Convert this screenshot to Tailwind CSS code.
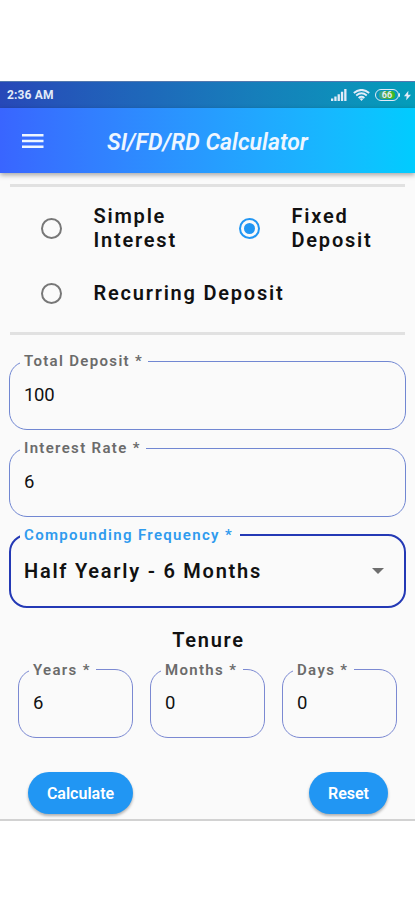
<!DOCTYPE html>
<html lang="en">
<head>
  <meta charset="UTF-8" />
  <meta name="viewport" content="width=device-width, initial-scale=1.0" />
  <title>SI/FD/RD Calculator</title>
  <script src="https://cdn.jsdelivr.net/npm/@tailwindcss/browser@4"></script>
</head>
<body class="bg-white font-['Roboto',sans-serif] text-[#111] h-screen overflow-hidden pt-[81px]">
  <div class="h-[740px] bg-[#fafafa] border-b-2 border-[#d2d2d2] flex flex-col">

    <!-- Status bar -->
    <div class="h-[27px] shrink-0 border-t border-[#5378ae] bg-linear-to-r from-[#2748b8] to-[#039dba] flex items-center justify-between pl-[7px] pr-[4px] text-[#e2ebf8]">
      <span class="text-[12px] font-bold tracking-[0.15px]">2:36 AM</span>
      <div class="flex items-center">
        <svg class="w-4 h-3" viewBox="0 0 16 12" fill="currentColor">
          <path d="M0 9.5h2.3V12H0zM3.3 7.5h2.3V12H3.3zM6.6 5.2h2.3V12H6.6zM9.9 2.8h2.3V12H9.9zM13.2 0h2.3v12h-2.3z" />
        </svg>
        <svg class="w-[17px] h-3 ml-[6px]" viewBox="0 0 17 12" fill="none" stroke="currentColor" stroke-width="1.9">
          <path d="M.8 4Q8.500-2.200 16.200 4M3.200 6.500Q8.500 2.200 13.800 6.500M5.600 9Q8.500 6.700 11.400 9" />
          <path d="M8.500 12L6.500 9.800Q8.500 8.500 10.500 9.800z" fill="currentColor" stroke="none" />
        </svg>
        <div class="ml-[5px] w-[24px] h-3 rounded-full border border-current py-px px-[3px]">
          <div class="h-full w-full rounded-full bg-linear-to-r from-[#3fa58b] via-[#4cab3a] to-[#35c01c] flex items-center justify-center text-[9px] font-bold leading-none">66</div>
        </div>
        <span class="w-px h-1 bg-current rounded-r"></span>
        <svg class="w-[7px] h-[11px] ml-[4px]" viewBox="0 0 8 11" fill="currentColor">
          <path d="M5 0L0 6.300h3L2.500 11 8 4.500H4.700z" />
        </svg>
      </div>
    </div>

    <!-- App bar -->
    <header class="h-[65px] shrink-0 bg-linear-to-r from-[#3965ff] to-[#00ccff] shadow-[0_2px_5px_rgba(0,0,0,0.35)] flex items-center pl-[22px] text-[#eef6ff]">
      <svg class="w-[22px] h-4" viewBox="0 0 22 16" fill="currentColor">
        <path d="M0 1h21.500v2.500H0zM0 6.800h21.500v2.500H0zM0 12.500h21.500V15H0z" />
      </svg>
      <h1 class="ml-[63px] pt-[5px] text-[23px] font-semibold italic tracking-[0.03px] whitespace-nowrap">SI/FD/RD Calculator</h1>
    </header>

    <main class="px-[10px] pt-[11px]">
      <!-- Deposit type -->
      <section class="h-[151px] border-y-[3px] border-[#e1e1e1] text-[20px] leading-[24px] font-semibold tracking-[1.78px]">
        <div class="flex pt-[17px]">
          <label class="w-[198px] flex items-center pl-[30.5px] gap-[32px]">
            <span class="w-[21px] h-[21px] rounded-full border-2 border-[#777] shrink-0"></span>
            <span>Simple<br />Interest</span>
          </label>
          <label class="flex items-center pl-[30.5px] gap-[32px]">
            <span class="w-[21px] h-[21px] rounded-full border-2 border-[#2196f3] shrink-0 flex items-center justify-center">
              <span class="w-[11px] h-[11px] rounded-full bg-[#2196f3]"></span>
            </span>
            <span>Fixed<br />Deposit</span>
          </label>
        </div>
        <label class="flex items-center pl-[30.5px] gap-[32px] mt-[29px]">
          <span class="w-[21px] h-[21px] rounded-full border-2 border-[#777] shrink-0"></span>
          <span class="whitespace-nowrap">Recurring Deposit</span>
        </label>
      </section>

      <!-- Inputs -->
      <div class="relative mt-[26px] -mx-px w-[397px] h-[69px] rounded-[18px] border-[1.5px] border-[#7187d2] flex items-center pl-[14px]">
        <span class="absolute left-[10px] -top-[11px] h-5 w-[128px] pl-1 bg-[#fafafa] text-[#6b6b6b] text-[15px] leading-5 font-semibold tracking-[1.33px] whitespace-nowrap">Total Deposit *</span>
        <span class="text-[18.5px] tracking-[-0.3px]">100</span>
      </div>
      <div class="relative mt-[18px] -mx-px w-[397px] h-[69px] rounded-[18px] border-[1.5px] border-[#7187d2] flex items-center pl-[14px]">
        <span class="absolute left-[10px] -top-[11px] h-5 w-[126px] pl-1 bg-[#fafafa] text-[#6b6b6b] text-[15px] leading-5 font-semibold tracking-[1.33px] whitespace-nowrap">Interest Rate *</span>
        <span class="text-[18.5px]">6</span>
      </div>
      <div class="relative mt-[17px] -mx-px w-[397px] h-[74px] rounded-[18px] border-2 border-[#2439b5] flex items-center justify-between pl-[13px] pr-[20px]">
        <span class="absolute left-[9px] -top-[11px] h-5 w-[220px] pl-1 bg-[#fafafa] text-[#2f9bee] text-[15px] leading-5 font-semibold tracking-[1.33px] whitespace-nowrap">Compounding Frequency *</span>
        <span class="text-[20px] font-semibold tracking-[1.75px]">Half Yearly - 6 Months</span>
        <svg class="w-3 h-1.5" viewBox="0 0 12 6" fill="#6e6e6e"><path d="M0 0h12L6 6z" /></svg>
      </div>

      <!-- Tenure -->
      <h2 class="mt-[19px] pl-0.5 text-center text-[20px] leading-[26px] font-semibold tracking-[1.75px]">Tenure</h2>
      <div class="mt-[16px] px-2 flex gap-[17px]">
        <div class="relative w-[115px] h-[69px] rounded-[18px] border-[1.5px] border-[#7b89d2] flex items-center pl-[14px]">
          <span class="absolute left-[10px] -top-[10px] h-5 w-[67px] pl-1 bg-[#fafafa] text-[#6b6b6b] text-[15px] leading-5 font-semibold tracking-[1.33px] whitespace-nowrap">Years *</span>
          <span class="text-[18.5px]">6</span>
        </div>
        <div class="relative w-[115px] h-[69px] rounded-[18px] border-[1.5px] border-[#7b89d2] flex items-center pl-[14px]">
          <span class="absolute left-[10px] -top-[10px] h-5 w-[82px] pl-1 bg-[#fafafa] text-[#6b6b6b] text-[15px] leading-5 font-semibold tracking-[1.33px] whitespace-nowrap">Months *</span>
          <span class="text-[18.5px]">0</span>
        </div>
        <div class="relative w-[115px] h-[69px] rounded-[18px] border-[1.5px] border-[#7b89d2] flex items-center pl-[14px]">
          <span class="absolute left-[10px] -top-[10px] h-5 w-[61px] pl-1 bg-[#fafafa] text-[#6b6b6b] text-[15px] leading-5 font-semibold tracking-[1.33px] whitespace-nowrap">Days *</span>
          <span class="text-[18.5px]">0</span>
        </div>
      </div>

      <!-- Actions -->
      <div class="mt-[34px] flex justify-between pl-[18px] pr-[17px] text-white text-[16px] font-semibold">
        <button class="w-[105px] h-[42px] pt-0.5 rounded-full bg-[#2196f3] shadow-[0_2px_3px_rgba(0,0,0,0.3)]">Calculate</button>
        <button class="w-[79px] h-[42px] pt-0.5 rounded-full bg-[#2196f3] shadow-[0_2px_3px_rgba(0,0,0,0.3)]">Reset</button>
      </div>
    </main>
  </div>
</body>
</html>
